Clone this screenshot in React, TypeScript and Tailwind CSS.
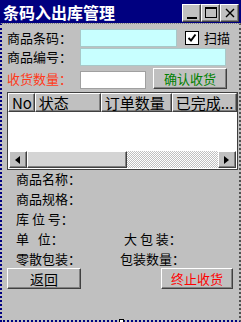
import React from 'react';

const raised =
  'border border-t-white border-l-white border-r-[#404040] border-b-[#404040] shadow-[inset_-1px_-1px_0_#808080]';

const TitleButton: React.FC<{ children: React.ReactNode }> = ({ children }) => (
  <div className={`w-[19px] h-[18px] bg-[#c0c0c0] flex items-center justify-center ${raised}`}>{children}</div>
);

const Label: React.FC<{ children: React.ReactNode; className?: string }> = ({ children, className }) => (
  <span className={`text-[13px] leading-none whitespace-pre ${className || 'text-black'}`}>{children}</span>
);

const HeaderCell: React.FC<{ w: string; children: React.ReactNode }> = ({ w, children }) => (
  <div className={`${w} h-[19px] bg-[#c0c0c0] flex items-center pl-[3px] text-[15px] leading-none ${raised}`}>
    {children}
  </div>
);

const App: React.FC = () => {
  return (
    <div
      className="w-[241px] h-[322px] bg-[#c0c0c0] flex flex-col overflow-hidden"
      style={{ fontFamily: '"Noto Sans CJK SC", "DejaVu Sans", sans-serif' }}
    >
      {/* title bar */}
      <div className="h-[23px] bg-[#000080] flex items-center justify-between pl-[3px] pr-[2px] shrink-0">
        <span className="text-white text-[16px] font-bold leading-none">条码入出库管理</span>
        <div className="flex gap-[0px] mt-[2px]">
          <TitleButton>
            <div className="w-[10px] h-[2px] bg-black mt-[10px]" />
          </TitleButton>
          <TitleButton>
            <div className="w-[12px] h-[11px] border border-black border-t-2" />
          </TitleButton>
          <TitleButton>
            <svg width="10" height="10" viewBox="0 0 10 10">
              <path d="M1 1L9 9M9 1L1 9" stroke="black" strokeWidth="1.4" />
            </svg>
          </TitleButton>
        </div>
      </div>

      {/* form body */}
      <div className="relative flex-1 flex flex-col border-l-2 border-r-2 border-b-2 border-t border-dotted border-l-[#000080] border-r-[#505050] border-b-[#000080] border-t-[#808080] pl-[5px] pr-[1px]">
        {/* row 1 */}
        <div className="flex items-center h-[19px] mt-[4px]">
          <Label className="w-[73px] text-black">商品条码：</Label>
          <div className="w-[97px] h-[18px] bg-[#c8ffff] border border-[#a8c8c8]" />
          <div className="ml-[8px] w-[14px] h-[14px] bg-white border border-black flex items-center justify-center">
            <svg width="10" height="10" viewBox="0 0 10 10">
              <path d="M1.5 5L4 7.5L8.5 1.5" stroke="black" strokeWidth="2" fill="none" />
            </svg>
          </div>
          <Label className="ml-[5px] text-black">扫描</Label>
        </div>
        {/* row 2 */}
        <div className="flex items-center h-[19px]">
          <Label className="w-[73px] text-black">商品编号：</Label>
          <div className="w-[146px] h-[18px] bg-[#c8ffff] border border-[#a8c8c8]" />
        </div>
        {/* row 3 */}
        <div className="flex items-center h-[22px] mt-[1px]">
          <Label className="w-[73px] text-[#ff3a1a]">收货数量：</Label>
          <div className="w-[66px] h-[18px] bg-white border border-[#a0a0a0] mt-[3px]" />
          <div
            className={`ml-[7px] w-[74px] h-[21px] flex items-center justify-center text-[13px] text-[#008000] leading-none ${raised}`}
          >
            确认收货
          </div>
        </div>

        {/* grid */}
        <div className="mt-[3px] h-[78px] border border-[#404040] bg-white flex flex-col">
          <div className="flex">
            <HeaderCell w="w-[27px]">No</HeaderCell>
            <HeaderCell w="w-[67px]">状态</HeaderCell>
            <HeaderCell w="w-[72px]">订单数量</HeaderCell>
            <HeaderCell w="w-[66px]">已完成...</HeaderCell>
          </div>
          <div className="flex-1" />
          <div className="h-[18px] flex items-stretch px-[1px] pb-[1px]">
            <div className={`w-[18px] bg-[#c0c0c0] flex items-center justify-center ${raised}`}>
              <svg width="6" height="8" viewBox="0 0 6 8">
                <path d="M5 0V8L0 4Z" fill="black" />
              </svg>
            </div>
            <div className={`w-[100px] bg-[#d4d4d4] ${raised}`} />
            <div className="flex-1 bg-[repeating-conic-gradient(#c0c0c0_0%_25%,#ffffff_0%_50%)] bg-[length:2px_2px]" />
            <div className={`w-[18px] bg-[#c0c0c0] flex items-center justify-center ${raised}`}>
              <svg width="6" height="8" viewBox="0 0 6 8">
                <path d="M0 0V8L5 4Z" fill="black" />
              </svg>
            </div>
          </div>
        </div>

        {/* info labels */}
        <div className="flex flex-col pl-[9px] mt-[2px] gap-[7px]">
          <Label>商品名称：</Label>
          <Label>商品规格：</Label>
          <Label>库 位 号：</Label>
          <div className="flex">
            <Label className="w-[108px] text-black">单   位：</Label>
            <Label>大 包 装：</Label>
          </div>
          <div className="flex">
            <Label className="w-[104px] text-black">零散包装：</Label>
            <Label>包装数量：</Label>
          </div>
        </div>

        {/* buttons */}
        <div className="flex justify-between mt-[3px] pr-[5px]">
          <div className={`w-[74px] h-[21px] flex items-center justify-center text-[14px] leading-none ${raised}`}>
            返回
          </div>
          <div
            className={`w-[72px] h-[21px] flex items-center justify-center text-[13px] text-[#ff0000] leading-none ${raised}`}
          >
            终止收货
          </div>
        </div>

        {/* resize handle */}
        <div className="absolute left-[117px] bottom-[-4px] w-[5px] h-[5px] bg-white border border-black" />
      </div>
    </div>
  );
};

export default App;
